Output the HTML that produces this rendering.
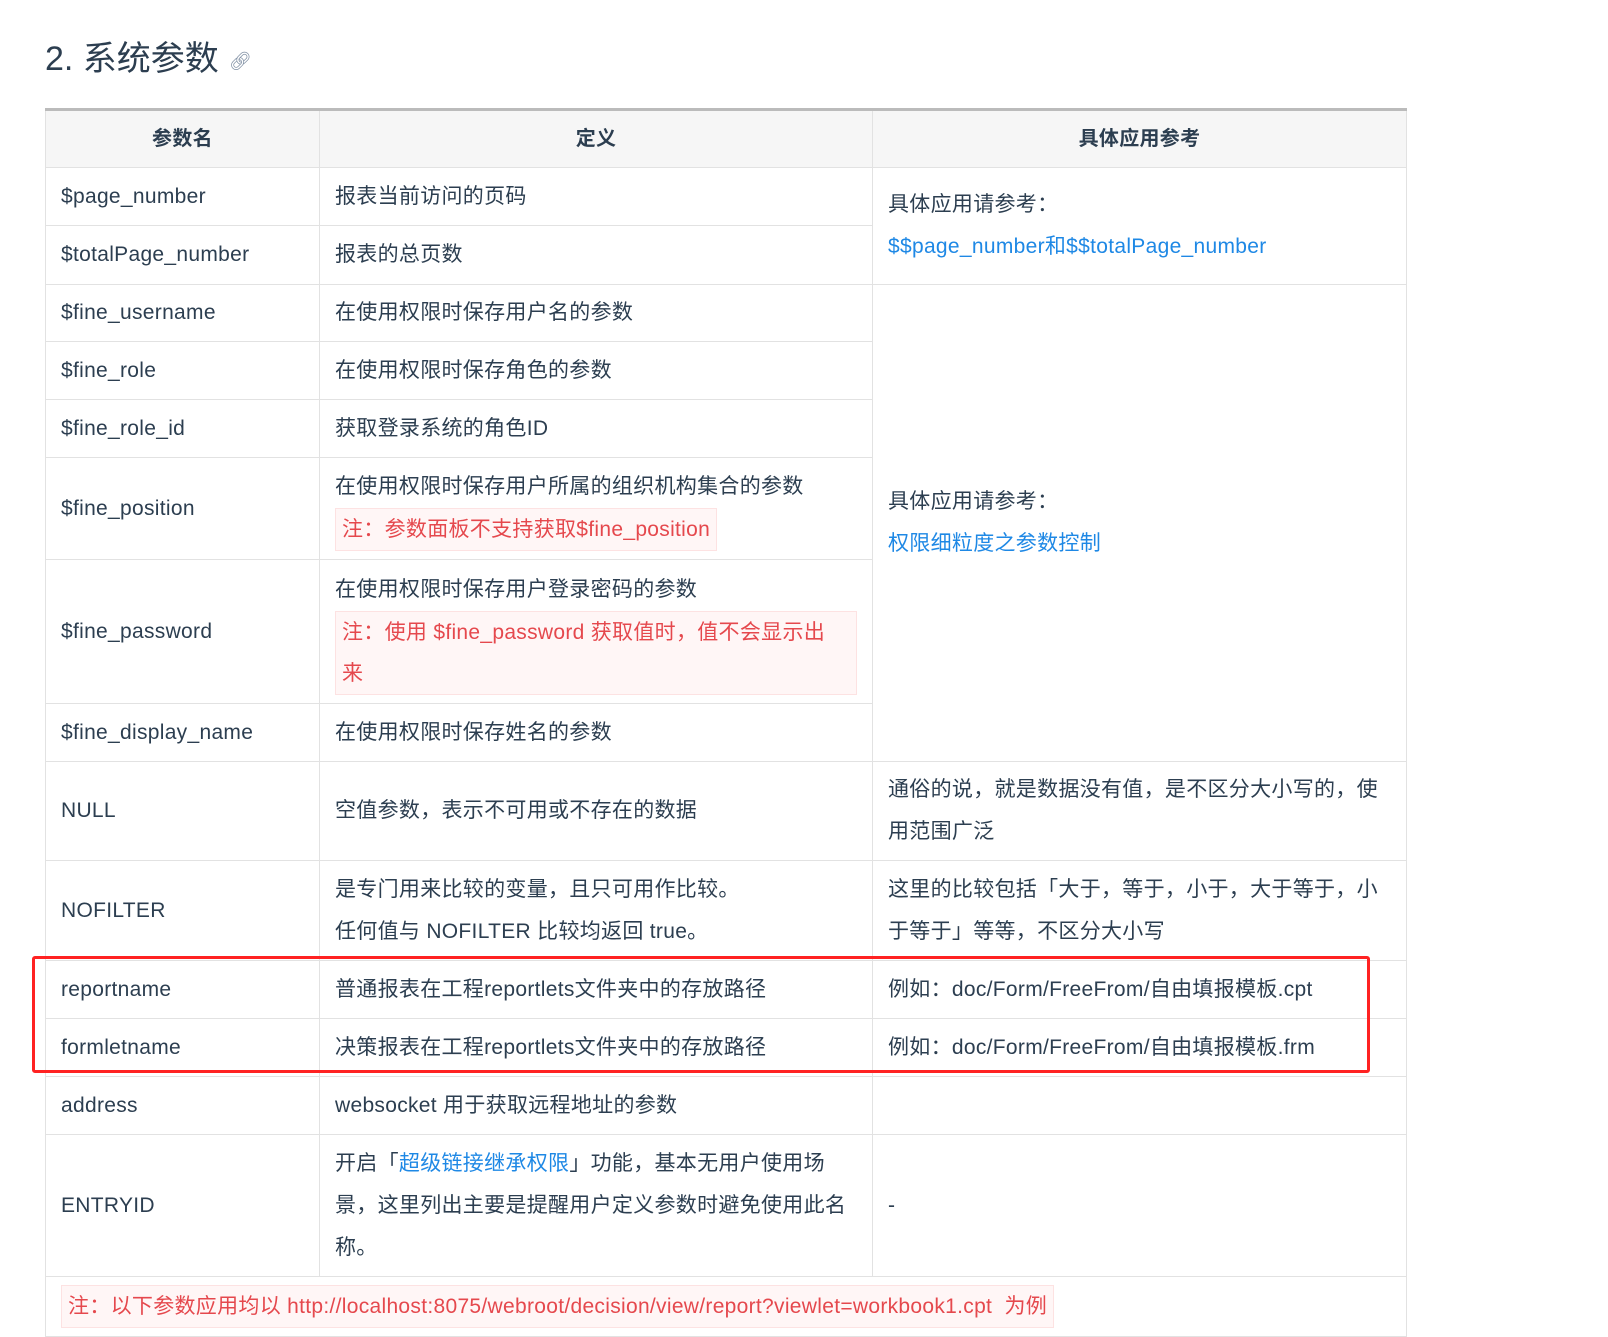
<!DOCTYPE html>
<html><head><meta charset="utf-8"><style>
*{box-sizing:border-box;margin:0;padding:0}
body{width:1608px;height:1329px;overflow:hidden;background:#fff;font-family:"Liberation Sans","Noto Sans CJK SC",sans-serif;color:#2c3e50;position:relative}
h2{position:absolute;left:45px;top:36px;font-size:34px;font-weight:400;color:#2c3e50;line-height:46px}
h2 span.l{font-size:18px;color:#7f8fa3;margin-left:10px;vertical-align:middle}
table{position:absolute;left:45px;top:108px;width:1362px;border-collapse:collapse;border-top:3px solid #bbb;font-size:21px;letter-spacing:0.3px}
td,th{border:1px solid #e2e2e2;padding:0 15px;vertical-align:middle;line-height:42px;text-align:left;font-weight:400}
th{background:#f6f6f6;font-weight:700;text-align:center;height:58px;font-size:20px}
.c1{width:274px}.c2{width:553px}
.note{display:inline-block;background:#fff6f6;border:1px solid #fde2e2;color:#e5484d;padding:0 6px;line-height:41px}
.blk{display:block;padding-right:30px}
a{color:#1e88e5;text-decoration:none}
.red{position:absolute;left:32px;top:956px;width:1338px;height:117px;border:3px solid #f22;border-radius:3px}
</style></head><body>
<h2>2. 系统参数<span class="l">&#128279;&#xFE0E;</span></h2>
<table>
<tr><th class="c1">参数名</th><th class="c2">定义</th><th>具体应用参考</th></tr>
<tr style="height:58px"><td>$page_number</td><td>报表当前访问的页码</td><td rowspan="2">具体应用请参考：<br><a>$$page_number和$$totalPage_number</a></td></tr>
<tr style="height:59px"><td>$totalPage_number</td><td>报表的总页数</td></tr>
<tr style="height:57px"><td>$fine_username</td><td>在使用权限时保存用户名的参数</td><td rowspan="6">具体应用请参考：<br><a>权限细粒度之参数控制</a></td></tr>
<tr style="height:58px"><td>$fine_role</td><td>在使用权限时保存角色的参数</td></tr>
<tr style="height:58px"><td>$fine_role_id</td><td>获取登录系统的角色ID</td></tr>
<tr style="height:102px"><td>$fine_position</td><td>在使用权限时保存用户所属的组织机构集合的参数<br><span class="note">注：参数面板不支持获取$fine_position</span></td></tr>
<tr style="height:144px"><td>$fine_password</td><td>在使用权限时保存用户登录密码的参数<br><span class="note blk">注：使用 $fine_password 获取值时，值不会显示出来</span></td></tr>
<tr style="height:58px"><td>$fine_display_name</td><td>在使用权限时保存姓名的参数</td></tr>
<tr style="height:99px"><td>NULL</td><td>空值参数，表示不可用或不存在的数据</td><td>通俗的说，就是数据没有值，是不区分大小写的，使用范围广泛</td></tr>
<tr style="height:100px"><td>NOFILTER</td><td>是专门用来比较的变量，且只可用作比较。<br>任何值与 NOFILTER 比较均返回 true。</td><td>这里的比较包括「大于，等于，小于，大于等于，小于等于」等等，不区分大小写</td></tr>
<tr style="height:58px"><td>reportname</td><td>普通报表在工程reportlets文件夹中的存放路径</td><td>例如：doc/Form/FreeFrom/自由填报模板.cpt</td></tr>
<tr style="height:58px"><td>formletname</td><td>决策报表在工程reportlets文件夹中的存放路径</td><td>例如：doc/Form/FreeFrom/自由填报模板.frm</td></tr>
<tr style="height:58px"><td>address</td><td>websocket 用于获取远程地址的参数</td><td></td></tr>
<tr style="height:142px"><td>ENTRYID</td><td>开启「<a>超级链接继承权限</a>」功能，基本无用户使用场景，这里列出主要是提醒用户定义参数时避免使用此名称。</td><td>-</td></tr>
<tr style="height:60px"><td colspan="3"><span class="note">注：以下参数应用均以 http://localhost:8075/webroot/decision/view/report?viewlet=workbook1.cpt &nbsp;为例</span></td></tr>
</table>
<div class="red"></div>
</body></html>
